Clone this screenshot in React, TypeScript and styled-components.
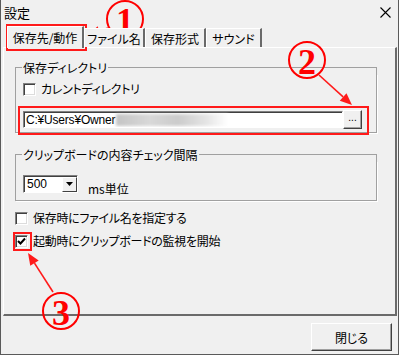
import React from "react";
import styled, { createGlobalStyle } from "styled-components";

const Global = createGlobalStyle`
  html, body { margin: 0; padding: 0; background: #f0f0f0; }
  * { box-sizing: border-box; }
`;

const FONT = `"Noto Sans CJK JP", "Noto Sans", sans-serif`;

const Window = styled.div`
  position: relative;
  width: 399px;
  height: 355px;
  background: #f0f0f0;
  border: 1px solid #5a5a5a;
  border-top: none;
  font-family: ${FONT};
  font-size: 12px;
  font-feature-settings: "palt";
  color: #000;
  display: flex;
  flex-direction: column;
  overflow: hidden;
`;

const TitleBar = styled.div`
  height: 26px;
  display: flex;
  align-items: center;
  justify-content: space-between;
  padding: 0 7px 2px 3px;
`;

const Title = styled.span`
  font-size: 13px;
  line-height: 1;
`;

const Tabs = styled.div`
  display: flex;
  align-items: flex-end;
  height: 21px;
  padding-left: 6px;
  position: relative;
  z-index: 1;
`;

const Tab = styled.div<{ $active?: boolean; $w: number }>`
  width: ${(p) => p.$w}px;
  height: ${(p) => (p.$active ? "22px" : "19px")};
  margin-bottom: ${(p) => (p.$active ? "-1px" : "0")};
  border-top: 1px solid #fff;
  border-left: 1px solid #fff;
  border-right: 2px solid #6a6a6a;
  background: #f0f0f0;
  display: flex;
  align-items: center;
  justify-content: center;
  white-space: nowrap;
`;

const Panel = styled.div`
  margin: 0 1px 0 2px;
  height: 269px;
  border-top: 1px solid #fff;
  border-left: 1px solid #fff;
  border-right: 2px solid #6a6a6a;
  border-bottom: 2px solid #6a6a6a;
  padding: 14px 18px 0 11px;
  display: flex;
  flex-direction: column;
`;

const Group = styled.section<{ $mt?: number }>`
  margin-top: ${(p) => p.$mt ?? 0}px;
  display: flex;
  flex-direction: column;
`;

const GroupHead = styled.div`
  display: flex;
  align-items: stretch;
  height: 12px;
  line-height: 12px;
  white-space: nowrap;
  &::before,
  &::after {
    content: "";
    height: 6px;
    align-self: flex-end;
    border-top: 1px solid #a0a0a0;
  }
  &::before {
    width: 6px;
    border-left: 1px solid #a0a0a0;
  }
  &::after {
    flex: 1;
    border-right: 1px solid #a0a0a0;
  }
`;

const GroupTitle = styled.span`
  padding: 0 1px;
`;

const GroupBody = styled.div<{ $h: number }>`
  height: ${(p) => p.$h}px;
  border: 1px solid #a0a0a0;
  border-top: none;
  box-shadow: 1px 1px 0 #fff;
  padding: 0 7px;
  display: flex;
  flex-direction: column;
`;

const CheckRow = styled.label<{ $mt?: number }>`
  display: flex;
  align-items: center;
  gap: 5px;
  margin-top: ${(p) => p.$mt ?? 0}px;
  line-height: 14px;
  letter-spacing: -0.3px;
`;

const Box = styled.span`
  width: 13px;
  height: 13px;
  background: #fff;
  border-top: 1px solid #808080;
  border-left: 1px solid #808080;
  border-right: 1px solid #fff;
  border-bottom: 1px solid #fff;
  box-shadow: inset 1px 1px 0 #404040, inset -1px -1px 0 #dcdcdc;
  display: flex;
  align-items: center;
  justify-content: center;
  flex: none;
`;

const PathRow = styled.div`
  display: flex;
  align-items: center;
  margin-top: 14px;
`;

const Field = styled.div`
  width: 320px;
  height: 17px;
  background: #fff;
  border-top: 1px solid #808080;
  border-left: 1px solid #808080;
  border-right: 1px solid #fff;
  border-bottom: 1px solid #fff;
  box-shadow: inset 1px 1px 0 #404040;
  display: flex;
  align-items: center;
  padding-left: 2px;
  font-family: "Liberation Sans", "Noto Sans CJK JP", sans-serif;
  font-size: 12px;
  letter-spacing: -0.2px;
  white-space: nowrap;
  overflow: hidden;
`;

const Blur = styled.span`
  display: inline-block;
  width: 112px;
  height: 12px;
  margin-left: 1px;
  background: linear-gradient(90deg, #c4c4c4, #d8d8d8 30%, #cbcbcb 55%, #e4e4e4 80%, #fff);
  filter: blur(1.5px);
`;

const SmallButton = styled.div`
  width: 19px;
  height: 19px;
  background: #f0f0f0;
  border-top: 1px solid #fff;
  border-left: 1px solid #fff;
  border-right: 1px solid #404040;
  border-bottom: 1px solid #404040;
  box-shadow: inset -1px -1px 0 #a0a0a0;
  display: flex;
  align-items: center;
  justify-content: center;
  font-family: "Liberation Sans", sans-serif;
  font-size: 10px;
  line-height: 1;
  padding-bottom: 4px;
`;

const ComboRow = styled.div`
  display: flex;
  align-items: center;
  gap: 10px;
  margin-top: 9px;
`;

const Combo = styled.div`
  width: 55px;
  height: 18px;
  background: #fff;
  border-top: 1px solid #808080;
  border-left: 1px solid #808080;
  border-right: 1px solid #fff;
  border-bottom: 1px solid #fff;
  box-shadow: inset 1px 1px 0 #404040;
  display: flex;
  align-items: stretch;
  font-family: "Liberation Sans", sans-serif;
  font-size: 12px;
`;

const ComboText = styled.span`
  flex: 1;
  display: flex;
  align-items: center;
  padding-left: 3px;
  padding-top: 1px;
`;

const ComboBtn = styled.span`
  width: 15px;
  margin: 1px 0 0 0;
  background: #f0f0f0;
  border-top: 1px solid #fff;
  border-left: 1px solid #fff;
  border-right: 1px solid #404040;
  border-bottom: 1px solid #404040;
  display: flex;
  align-items: center;
  justify-content: center;
`;

const Unit = styled.span`
  margin-top: 10px;
`;

const Footer = styled.div`
  flex: 1;
  display: flex;
  justify-content: flex-end;
  align-items: flex-start;
  padding: 7px 6px 0 0;
`;

const Button = styled.div`
  width: 81px;
  height: 28px;
  background: #f0f0f0;
  border-top: 1px solid #fff;
  border-left: 1px solid #fff;
  border-right: 1px solid #404040;
  border-bottom: 1px solid #404040;
  box-shadow: inset -1px -1px 0 #a0a0a0;
  display: flex;
  align-items: center;
  justify-content: center;
`;

const RedBox = styled.div<{ $x: number; $y: number; $w: number; $h: number }>`
  position: absolute;
  left: ${(p) => p.$x}px;
  top: ${(p) => p.$y}px;
  width: ${(p) => p.$w}px;
  height: ${(p) => p.$h}px;
  border: 2px solid #ff1a1a;
  pointer-events: none;
`;

const Badge = styled.div<{ $x: number; $y: number }>`
  position: absolute;
  left: ${(p) => p.$x - 19}px;
  top: ${(p) => p.$y - 19}px;
  width: 38px;
  height: 38px;
  border-radius: 50%;
  border: 2px solid #ff0000;
  color: #ff0000;
  font-family: "Liberation Serif", "DejaVu Serif", serif;
  font-weight: bold;
  font-size: 36px;
  line-height: 1;
  display: flex;
  align-items: center;
  justify-content: center;
  padding-top: 3px;
`;

const Overlay = styled.svg`
  position: absolute;
  left: 0;
  top: 0;
  pointer-events: none;
`;

function Arrow({ x1, y1, x2, y2 }: { x1: number; y1: number; x2: number; y2: number }) {
  const a = Math.atan2(y2 - y1, x2 - x1);
  const L = 12;
  const W = 5;
  const bx = x2 - L * Math.cos(a);
  const by = y2 - L * Math.sin(a);
  const p1 = `${bx + W * Math.sin(a)},${by - W * Math.cos(a)}`;
  const p2 = `${bx - W * Math.sin(a)},${by + W * Math.cos(a)}`;
  return (
    <g>
      <line x1={x1} y1={y1} x2={bx} y2={by} stroke="#ff1a1a" strokeWidth={1.6} />
      <polygon points={`${x2},${y2} ${p1} ${p2}`} fill="#ff1a1a" />
    </g>
  );
}

function Check() {
  return (
    <svg width="9" height="9" viewBox="0 0 9 9">
      <path d="M1 4 L3.5 6.5 L8 1.5" stroke="#000" strokeWidth="2" fill="none" />
    </svg>
  );
}

export default function App() {
  return (
    <>
      <Global />
      <Window>
        <TitleBar>
          <Title>設定</Title>
          <svg width="11" height="11" viewBox="0 0 11 11">
            <path d="M0.5 0.5 L10.5 10.5 M10.5 0.5 L0.5 10.5" stroke="#000" strokeWidth="1.1" />
          </svg>
        </TitleBar>
        <Tabs>
          <Tab $active $w={77}>保存先/動作</Tab>
          <Tab $w={61}>ファイル名</Tab>
          <Tab $w={61}>保存形式</Tab>
          <Tab $w={56}>サウンド</Tab>
        </Tabs>
        <Panel>
          <Group>
            <GroupHead>
              <GroupTitle>保存ディレクトリ</GroupTitle>
            </GroupHead>
            <GroupBody $h={59}>
              <CheckRow $mt={8}>
                <Box />
                カレントディレクトリ
              </CheckRow>
              <PathRow>
                <Field>
                  C:¥Users¥Owner
                  <Blur />
                </Field>
                <SmallButton>...</SmallButton>
              </PathRow>
            </GroupBody>
          </Group>
          <Group $mt={16}>
            <GroupHead>
              <GroupTitle>クリップボードの内容チェック間隔</GroupTitle>
            </GroupHead>
            <GroupBody $h={40}>
              <ComboRow>
                <Combo>
                  <ComboText>500</ComboText>
                  <ComboBtn>
                    <svg width="7" height="4" viewBox="0 0 7 4">
                      <path d="M0 0 H7 L3.5 4 Z" fill="#000" />
                    </svg>
                  </ComboBtn>
                </Combo>
                <Unit>ms単位</Unit>
              </ComboRow>
            </GroupBody>
          </Group>
          <CheckRow $mt={10}>
            <Box />
            保存時にファイル名を指定する
          </CheckRow>
          <CheckRow $mt={9}>
            <Box>
              <Check />
            </Box>
            起動時にクリップボードの監視を開始
          </CheckRow>
        </Panel>
        <Footer>
          <Button>閉じる</Button>
        </Footer>

        <RedBox $x={5} $y={24} $w={81} $h={27} />
        <RedBox $x={17} $y={106} $w={351} $h={29} />
        <RedBox $x={12} $y={232} $w={19} $h={19} />

        <Overlay width="399" height="355" viewBox="0 0 399 355">
          <Arrow x1={107} y1={28} x2={87} y2={35} />
          <Arrow x1={318} y1={75} x2={351} y2={105} />
          <Arrow x1={52} y1={292} x2={27} y2={253} />
        </Overlay>
        <Badge $x={124} $y={19}>1</Badge>
        <Badge $x={306} $y={60}>2</Badge>
        <Badge $x={60} $y={311}>3</Badge>
      </Window>
    </>
  );
}
